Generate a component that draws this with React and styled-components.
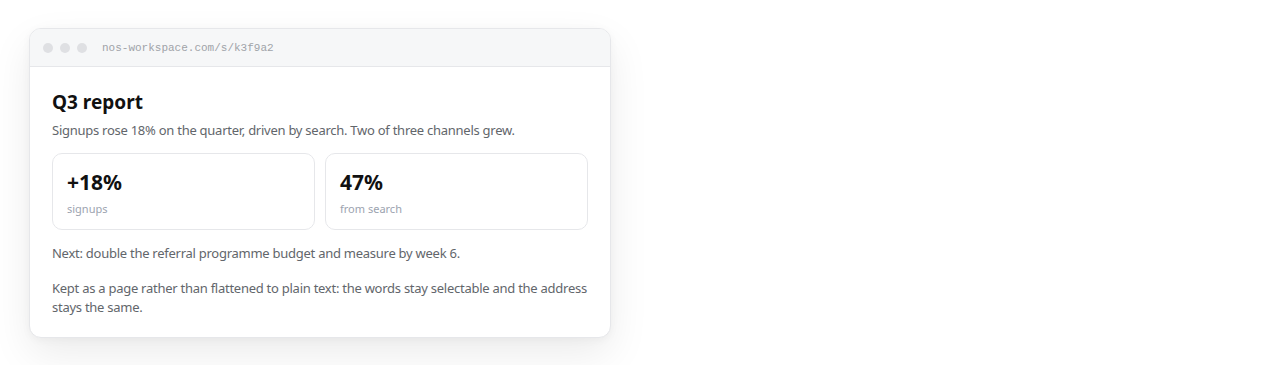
import React from "react";
import styled, { createGlobalStyle } from "styled-components";

const Global = createGlobalStyle`
  html, body { margin: 0; padding: 0; background: #ffffff; }
  body { font-family: "Noto Sans", "Open Sans", sans-serif; }
`;

const Page = styled.div`
  padding: 28px 29px;
`;

const Window = styled.div`
  width: 582px;
  box-sizing: border-box;
  border: 1px solid #e6e7ea;
  border-radius: 12px;
  background: #ffffff;
  overflow: hidden;
  box-shadow: 0 16px 40px rgba(0, 0, 0, 0.08), 0 2px 8px rgba(0, 0, 0, 0.04);
`;

const Chrome = styled.div`
  height: 37px;
  display: flex;
  align-items: center;
  gap: 7px;
  padding: 0 13px;
  background: #f6f7f8;
  border-bottom: 1px solid #e6e7ea;
`;

const Dot = styled.span`
  width: 10px;
  height: 10px;
  border-radius: 50%;
  background: #dfe0e3;
`;

const Url = styled.span`
  margin-left: 8px;
  font-family: "Liberation Mono", "DejaVu Sans Mono", monospace;
  font-size: 11px;
  color: #a0a3a8;
`;

const Body = styled.div`
  padding: 22px 22px 20px;
`;

const Title = styled.h1`
  margin: 0 0 6px;
  font-size: 19px;
  font-weight: 700;
  color: #111111;
  line-height: 26px;
`;

const Para = styled.p`
  margin: ${(p) => p.$mt || 0}px 0 0;
  font-size: 13px;
  letter-spacing: -0.26px;
  line-height: 19px;
  color: #62666b;
`;

const Stats = styled.div`
  display: grid;
  grid-template-columns: 1fr 1fr;
  gap: 10px;
  margin-top: 13px;
`;

const Stat = styled.div`
  border: 1px solid #e6e7ea;
  border-radius: 10px;
  padding: 13px 14px 12px;
`;

const Value = styled.div`
  font-size: 21px;
  font-weight: 700;
  color: #111111;
  line-height: 30px;
`;

const Label = styled.div`
  margin-top: 4px;
  font-size: 11px;
  color: #9ca3af;
  line-height: 16px;
`;

export default function App() {
  return (
    <>
      <Global />
      <Page>
        <Window>
          <Chrome>
            <Dot />
            <Dot />
            <Dot />
            <Url>nos-workspace.com/s/k3f9a2</Url>
          </Chrome>
          <Body>
            <Title>Q3 report</Title>
            <Para>
              Signups rose 18% on the quarter, driven by search. Two of three channels grew.
            </Para>
            <Stats>
              <Stat>
                <Value>+18%</Value>
                <Label>signups</Label>
              </Stat>
              <Stat>
                <Value>47%</Value>
                <Label>from search</Label>
              </Stat>
            </Stats>
            <Para $mt={14}>Next: double the referral programme budget and measure by week 6.</Para>
            <Para $mt={16}>
              Kept as a page rather than flattened to plain text: the words stay selectable and the
              address stays the same.
            </Para>
          </Body>
        </Window>
      </Page>
    </>
  );
}
